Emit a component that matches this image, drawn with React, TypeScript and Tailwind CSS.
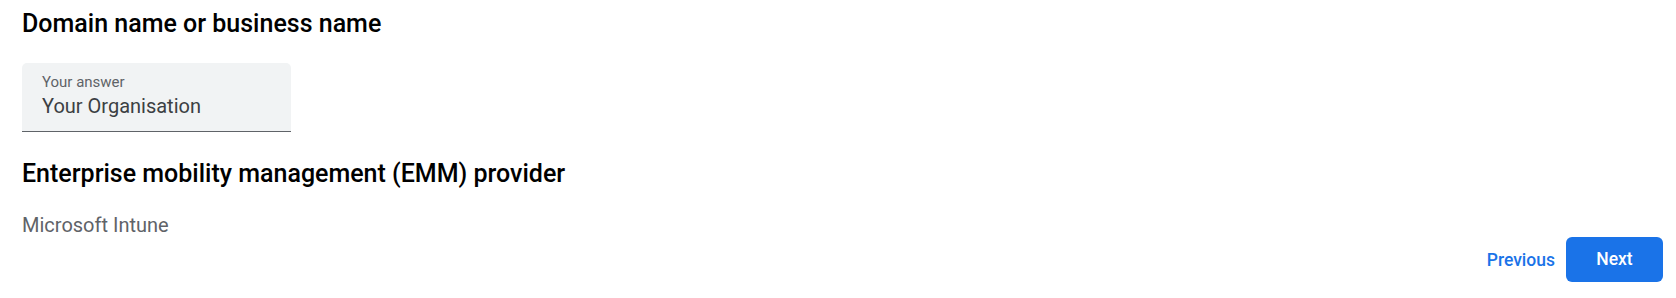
const App = () => {
  return (
    <div className="min-h-[298px] w-full bg-white pl-[22px] pr-[13px] pt-[8px] font-['Roboto',sans-serif]">
      <h2 className="text-[25px] leading-[32px] font-medium text-[#000]">Domain name or business name</h2>

      {/* answer field */}
      <div className="mt-[23px] w-[269px] rounded-t-[5px] border-b border-[#5f6368] bg-[#f1f3f4] px-[20px] pt-[9px] pb-[12px]">
        <div className="text-[15px] leading-[20px] text-[#5f6368]">Your answer</div>
        <div className="mt-[1px] text-[20px] leading-[26px] text-[#3c4043]">Your Organisation</div>
      </div>

      <h2 className="mt-[26px] text-[25px] leading-[32px] font-medium text-[#000]">
        Enterprise mobility management (EMM) provider
      </h2>

      <div className="mt-[22px] text-[20px] leading-[26px] text-[#5f6368]">Microsoft Intune</div>

      <div className="-mt-px flex items-center justify-end gap-[11px]">
        <button className="text-[17.5px] leading-[24px] font-medium text-[#1a73e8]">Previous</button>
        <button className="h-[45px] w-[97px] rounded-[6px] bg-[#1a73e8] text-[17.5px] font-medium text-white">
          Next
        </button>
      </div>
    </div>
  );
};

export default App;
